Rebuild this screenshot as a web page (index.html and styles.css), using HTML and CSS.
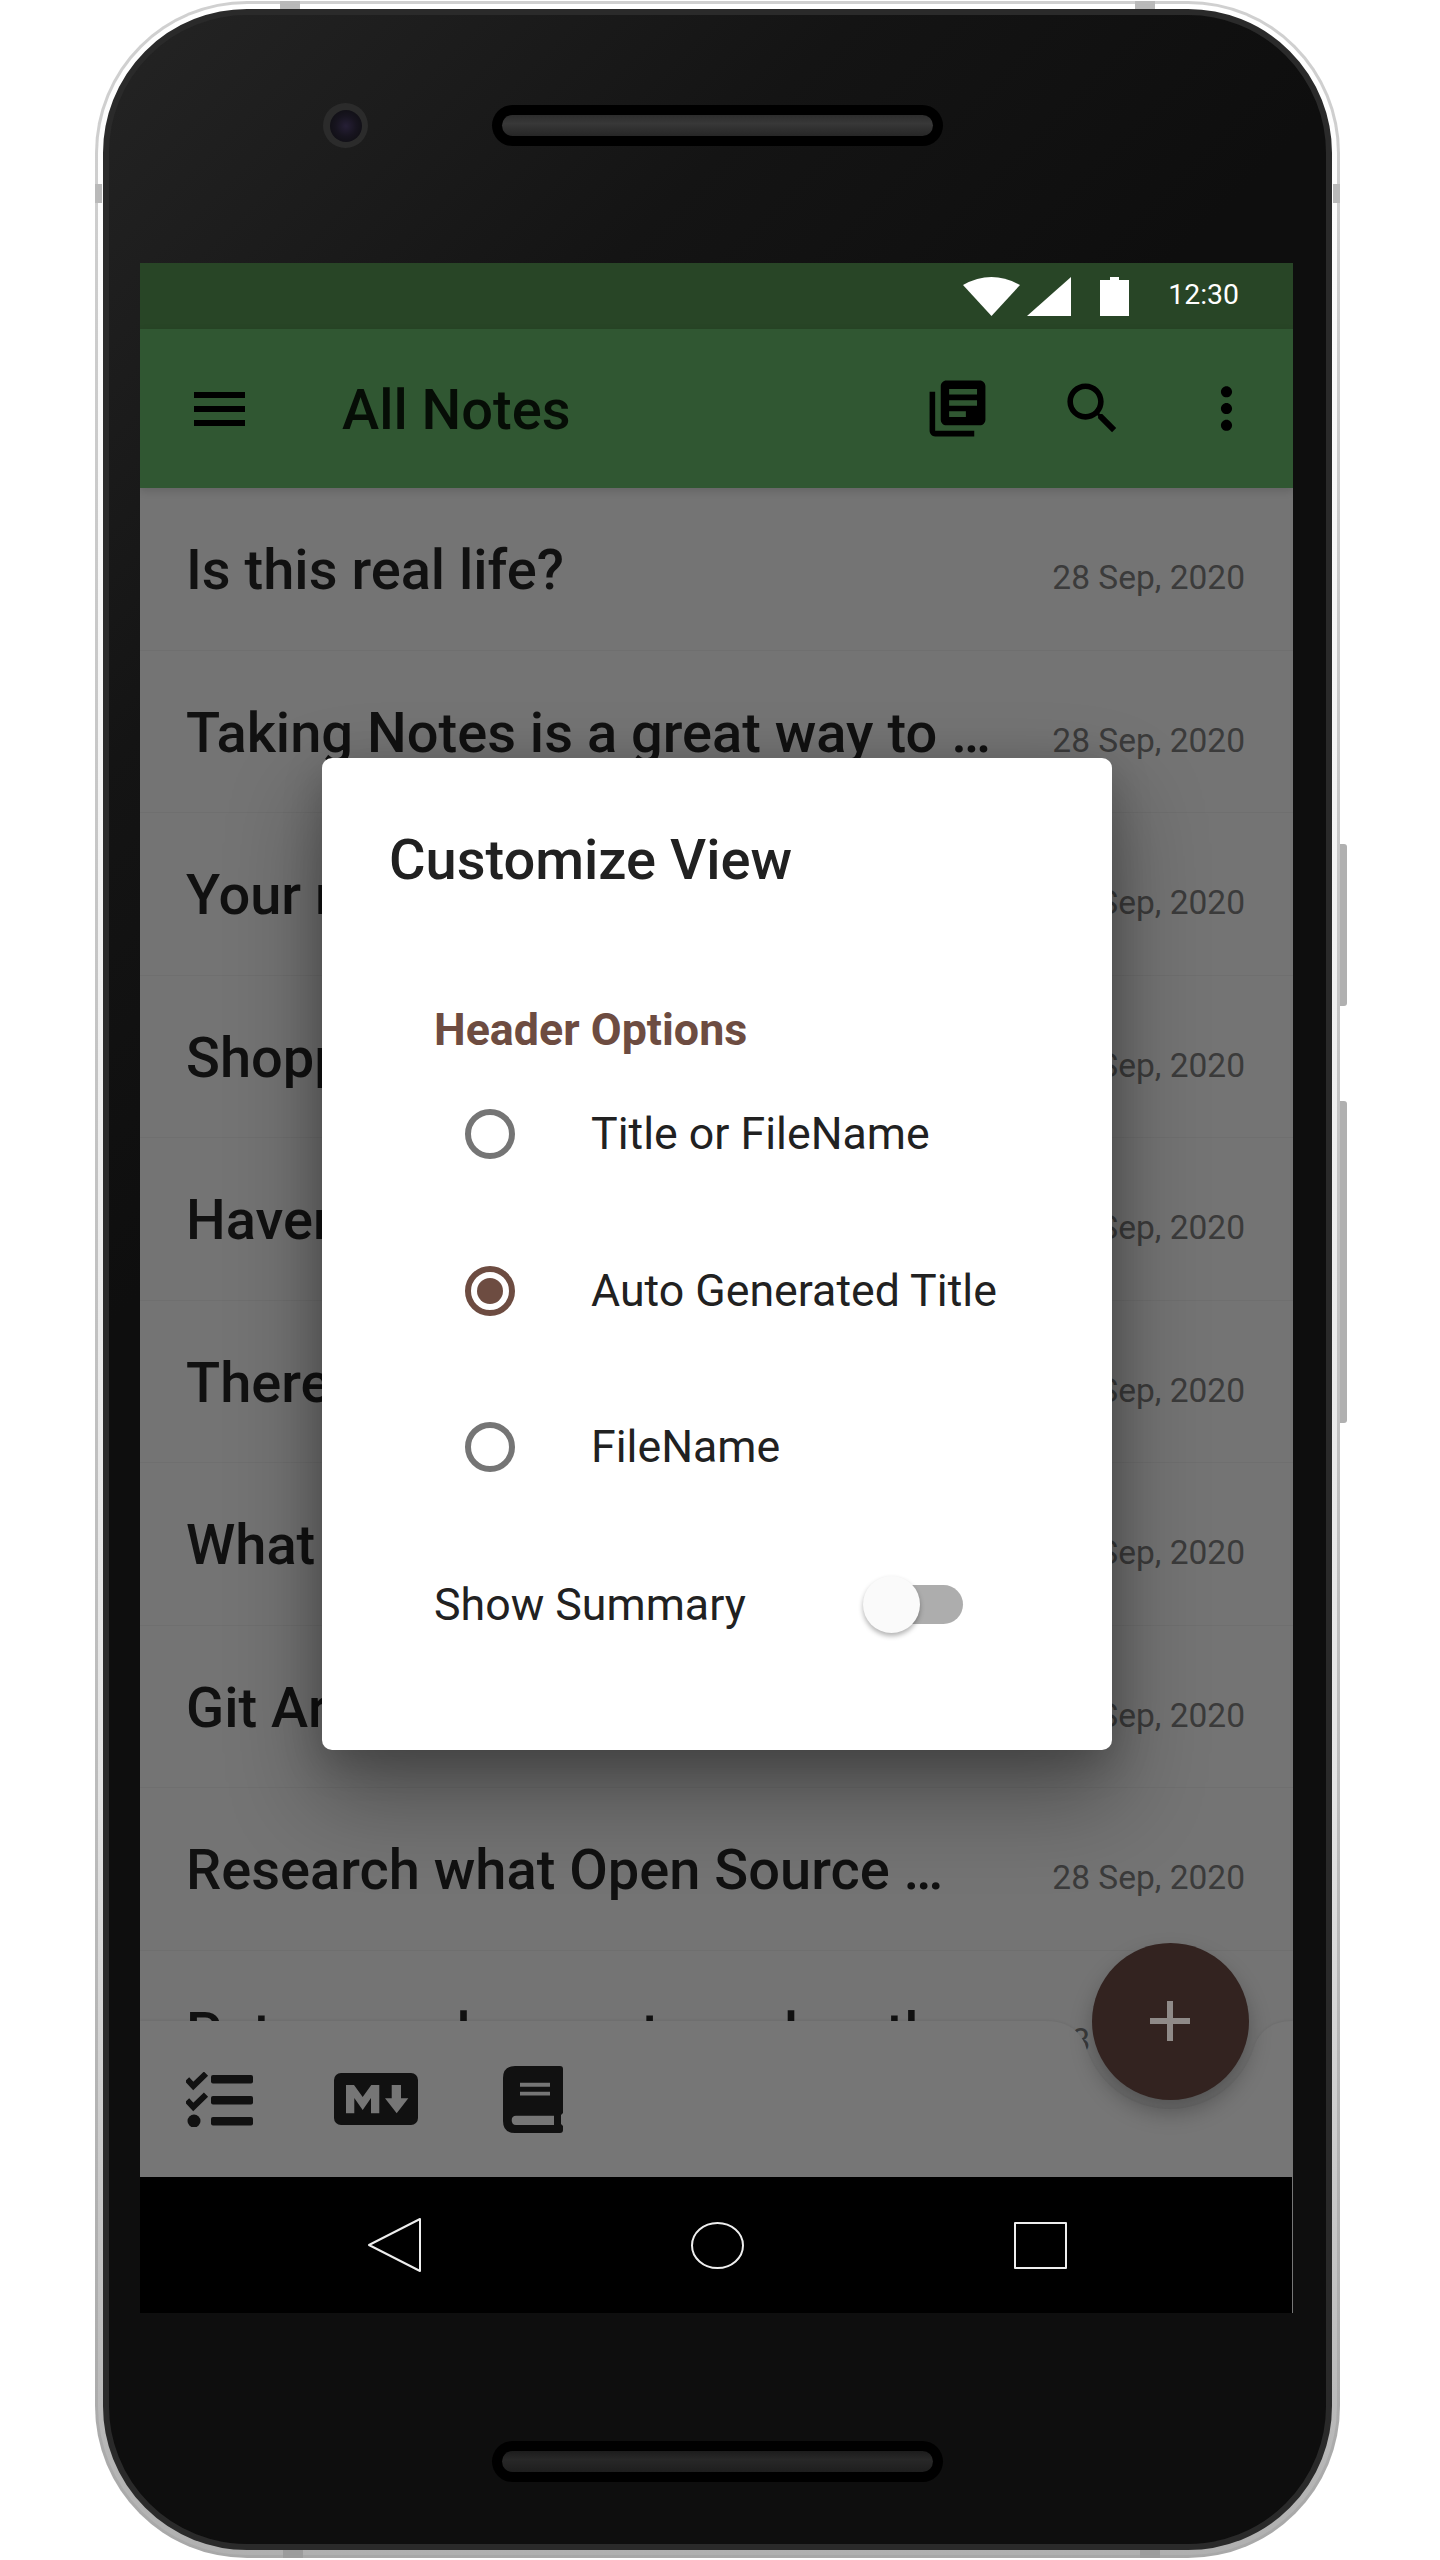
FILE: index.html
```html
<!DOCTYPE html>
<html lang="en"><head>

<meta charset="utf-8" />
<meta name="viewport" content="width=device-width, initial-scale=1" />
<title>All Notes</title>

<link rel="stylesheet" href="styles.css">

</head><body>

<div class="phone">
	<span class="notch notch_t1"></span>
	<span class="notch notch_t2"></span>
	<span class="notch notch_l"></span>
	<span class="notch notch_r"></span>
	<span class="notch notch_b1"></span>
	<span class="notch notch_b2"></span>
	<span class="side_btn side_btn_power"></span>
	<span class="side_btn side_btn_volume"></span>

	<div class="rim"><div class="body">

		<div class="bezel_top">
			<div class="camera"><span></span></div>
			<div class="speaker"><span></span></div>
		</div>

		<div class="screen">

			<div class="status_bar">
				<svg class="st_wifi" width="57" height="39" viewBox="0 0 57 39"><path d="M0 8Q28.5 -8 57 8L28.5 39Z" /></svg>
				<svg class="st_signal" width="44" height="39" viewBox="0 0 44 39"><path d="M44 0V39H0Z" /></svg>
				<svg class="st_battery" width="29" height="39" viewBox="0 0 29 39"><path d="M10 0H19V3H29V39H0V3H10Z" /></svg>
				<span class="st_time">12:30</span>
			</div>

			<div class="app_bar">
				<svg class="ic_menu" width="51" height="34" viewBox="0 0 51 34"><path d="M0 0H51V6H0ZM0 14H51V20H0ZM0 28H51V34H0Z" /></svg>
				<div class="app_title">All Notes</div>
				<div class="app_actions">
					<svg width="67" height="67" viewBox="0 0 24 24"><path d="M4 6H2v14c0 1.1.9 2 2 2h14v-2H4V6zm16-4H8c-1.1 0-2 .9-2 2v12c0 1.1.9 2 2 2h12c1.1 0 2-.9 2-2V4c0-1.1-.9-2-2-2zm-1 9H9V9h10v2zm-4 4H9v-2h6v2zm4-8H9V5h10v2z" /></svg>
					<svg width="67" height="67" viewBox="0 0 24 24"><path d="M15.5 14h-.79l-.28-.27C15.41 12.59 16 11.11 16 9.5 16 5.91 13.09 3 9.5 3S3 5.91 3 9.5 5.91 16 9.5 16c1.61 0 3.09-.59 4.23-1.57l.27.28v.79l5 4.99L20.49 19l-4.99-5zm-6 0C7.01 14 5 11.99 5 9.5S7.01 5 9.5 5 14 7.01 14 9.5 11.99 14 9.5 14z" /></svg>
					<svg width="67" height="67" viewBox="0 0 24 24"><path d="M12 8c1.1 0 2-.9 2-2s-.9-2-2-2-2 .9-2 2 .9 2 2 2zm0 2c-1.1 0-2 .9-2 2s.9 2 2 2 2-.9 2-2-.9-2-2-2zm0 6c-1.1 0-2 .9-2 2s.9 2 2 2 2-.9 2-2-.9-2-2-2z" /></svg>
				</div>
			</div>

			<div class="main">
				<div class="note_list">
					<div class="note_row"><span class="note_title">Is this real life?</span><span class="note_date">28 Sep, 2020</span></div>
					<div class="note_row"><span class="note_title">Taking Notes is a great way to …</span><span class="note_date">28 Sep, 2020</span></div>
					<div class="note_row"><span class="note_title">Your n</span><span class="note_date">28 Sep, 2020</span></div>
					<div class="note_row"><span class="note_title">Shopp</span><span class="note_date">28 Sep, 2020</span></div>
					<div class="note_row"><span class="note_title">Haven</span><span class="note_date">28 Sep, 2020</span></div>
					<div class="note_row"><span class="note_title">There</span><span class="note_date">28 Sep, 2020</span></div>
					<div class="note_row"><span class="note_title">What</span><span class="note_date">28 Sep, 2020</span></div>
					<div class="note_row"><span class="note_title">Git Ar</span><span class="note_date">28 Sep, 2020</span></div>
					<div class="note_row"><span class="note_title">Research what Open Source …</span><span class="note_date">28 Sep, 2020</span></div>
					<div class="note_row"><span class="note_title">Put some dreams to end so the …</span><span class="note_date">28 Sep, 2020</span></div>
				</div>

				<div class="bottom_bar">
					<svg class="bar_shape" width="1153" height="156" viewBox="0 0 1153 156"><path d="M0 0H905C930 0 942 12 946.6 28A88 88 0 0 0 1113.4 28C1118 12 1130 0 1153 0V156H0Z" /></svg>
					<svg class="bar_icon" width="67" height="55" viewBox="0 0 67 55">
						<path class="ic_stroke" d="M1 7.3L7.3 14L20 1.7M1 28.3L7.3 35L20 22.7" />
						<circle cx="8" cy="49" r="6.5" />
						<rect x="25" y="3" width="42" height="8.5" rx="2" />
						<rect x="25" y="24" width="42" height="8.5" rx="2" />
						<rect x="25" y="45" width="42" height="8.5" rx="2" />
					</svg>
					<svg class="bar_icon" width="84" height="52" viewBox="0 0 84 52">
						<rect width="84" height="52" rx="7" />
						<path class="ic_cut" d="M12 12H20L28.7 24L37.3 12H45.3V40.3H37V25L28.7 37L20.3 25V40.3H12Z" />
						<path class="ic_cut" d="M57.7 12H67V25.3H74.3L62.7 40.3L51 25.3H57.7Z" />
					</svg>
					<svg class="bar_icon bar_icon_book" width="60" height="67" viewBox="0 0 60 67">
						<path d="M12 0H57Q60 0 60 3V47L58 49V58L60 60V64Q60 67 57 67H12Q0 67 0 55V12Q0 0 12 0Z" />
						<path class="ic_cut" d="M13 49.7H51V59H13Q8.7 59 8.7 54.3Q8.7 49.7 13 49.7ZM17 16.7H47V20.7H17ZM17 25.7H47V29.5H17Z" />
					</svg>
				</div>

				<div class="fab"><svg width="40" height="40" viewBox="0 0 40 40"><path d="M17 0H23V17H40V23H23V40H17V23H0V17H17Z" /></svg></div>
			</div>

			<div class="nav_bar">
				<svg class="nav_icon" width="55" height="56" viewBox="0 0 55 56"><path d="M2 28L53 2V54Z" /></svg>
				<svg class="nav_icon" width="53" height="47" viewBox="0 0 53 47"><ellipse cx="26.5" cy="23.5" rx="25.5" ry="22.5" /></svg>
				<svg class="nav_icon" width="53" height="47" viewBox="0 0 53 47"><rect x="1" y="1" width="51" height="45" /></svg>
			</div>

			<div class="dialog">
				<div class="dialog_title">Customize View</div>
				<div class="dialog_section">Header Options</div>
				<div class="option"><span class="radio"></span><span class="option_text">Title or FileName</span></div>
				<div class="option"><span class="radio radio_on"></span><span class="option_text">Auto Generated Title</span></div>
				<div class="option"><span class="radio"></span><span class="option_text">FileName</span></div>
				<div class="summary_row">
					<span class="summary_text">Show Summary</span>
					<span class="switch"><span class="switch_track"></span><span class="switch_thumb"></span></span>
				</div>
			</div>

		</div>

		<div class="bezel_bottom">
			<div class="speaker speaker_low"><span></span></div>
		</div>

	</div></div>
</div>

</body></html>
```

FILE: styles.css
```css
:root {
	--list-bg     : #747474;
	--bar-bg      : #767676;
	--icon-dark   : #111111;
	--note-text   : #111111;
	--brown       : #6d4c41;
	--dialog-text : #212121;
}
* {
	box-sizing : border-box;
}
body {
	margin      : 0;
	background  : #ffffff;
	font-family : Roboto, sans-serif;
}

/* device frame */
.phone {
	position      : relative;
	width         : 1245px;
	margin        : 1px 0 0 95px;
	padding       : 3px;
	border-radius : 152px;
	background    : linear-gradient(to bottom, #d0d0d0, #bcbcbc 70%, #a8a8a8);
}
.rim {
	padding       : 5px;
	border-radius : 149px;
	background    : linear-gradient(to bottom, #ffffff, #e4e4e4 70%, #b0b0b0);
}
.body {
	border        : 6px solid #2a2a2a;
	border-radius : 144px;
	background    : linear-gradient(135deg, #242424, #141414 20%, #0e0e0e 35%);
}
.notch {
	position   : absolute;
	background : #b9b9b9;
}
.notch_t1 , .notch_t2 , .notch_b1 , .notch_b2 {
	width  : 20px;
	height : 8px;
}
.notch_t1 { top : 0; left : 185px; }
.notch_t2 { top : 0; left : 1040px; }
.notch_b1 { bottom : 0; left : 188px; background : #9c9c9c; }
.notch_b2 { bottom : 0; left : 1045px; background : #9c9c9c; }
.notch_l , .notch_r {
	top    : 183px;
	width  : 7px;
	height : 19px;
}
.notch_l { left : 0; }
.notch_r { right : 0; }
.side_btn {
	position      : absolute;
	left          : 100%;
	width         : 7px;
	background    : #b0b0b0;
	border-radius : 0 3px 3px 0;
}
.side_btn_power  { top : 843px;  height : 162px; }
.side_btn_volume { top : 1100px; height : 322px; }

.bezel_top {
	display      : flex;
	align-items  : center;
	height       : 248px;
	padding      : 88px 0 115px 214px;
	gap          : 124px;
}
.bezel_bottom {
	display         : flex;
	justify-content : center;
	height          : 231px;
	padding-top     : 128px;
}
.camera {
	display         : flex;
	align-items     : center;
	justify-content : center;
	width           : 45px;
	height          : 45px;
	border-radius   : 50%;
	background      : #2b2b2b;
}
.camera span {
	width         : 32px;
	height        : 32px;
	border-radius : 50%;
	background    : radial-gradient(circle, #261f36 0, #17141f 45%, #0c0c0e 100%);
}
.speaker {
	display       : flex;
	align-items   : center;
	width         : 451px;
	height        : 41px;
	padding       : 0 10px;
	border-radius : 21px;
	background    : #000000;
}
.speaker span {
	flex-grow     : 1;
	height        : 21px;
	border-radius : 11px;
	background    : linear-gradient(to bottom, #2c2c2c, #383838 40%, #262626);
}
.speaker_low span {
	background : linear-gradient(to bottom, #1c1c1c, #282828 40%, #1e1e1e);
}

/* screen */
.screen {
	position       : relative;
	display        : flex;
	flex-direction : column;
	width          : 1153px;
	height         : 2050px;
	margin-left    : 31px;
	overflow       : hidden;
}
.status_bar {
	display         : flex;
	align-items     : center;
	justify-content : flex-end;
	flex-shrink     : 0;
	height          : 66px;
	padding-right   : 54px;
	background      : #284526;
	fill            : #ffffff;
}
.st_signal  { margin-left : 7px; }
.st_battery { margin-left : 29px; }
.st_time {
	margin-left : 39px;
	color       : #ffffff;
	font-size   : 28.4px;
	position    : relative;
	top         : -2px;
}
.app_bar {
	position    : relative;
	z-index     : 2;
	display     : flex;
	align-items : center;
	flex-shrink : 0;
	height      : 159px;
	padding     : 0 33px 0 54px;
	background  : #305732;
	box-shadow  : 0 3px 8px rgba(0, 0, 0, 0.14);
	fill        : #000000;
}
.app_title {
	flex-grow   : 1;
	margin-left : 97px;
	padding-top : 3px;
	color       : #060d06;
	font-size   : 56px;
	font-weight : 500;
}
.app_actions {
	display : flex;
	gap     : 67.5px;
}
.app_actions svg {
	display : block;
}
.main {
	position   : relative;
	flex-grow  : 1;
	overflow   : hidden;
	background : var(--list-bg);
}
.note_row {
	display         : flex;
	align-items     : baseline;
	justify-content : space-between;
	height          : 162.5px;
	padding         : 49px 48px 0 46px;
	border-bottom   : 1px solid rgba(0, 0, 0, 0.035);
}
.note_title {
	color       : var(--note-text);
	font-size   : 56px;
	font-weight : 500;
	white-space : nowrap;
}
.note_date {
	color     : #3b3b3b;
	font-size : 33.5px;
}
.bottom_bar {
	position    : absolute;
	left        : 0;
	right       : 0;
	bottom      : 0;
	display     : flex;
	align-items : center;
	gap         : 81px;
	height      : 156px;
	padding     : 0 0 0 46px;
	fill        : var(--icon-dark);
}
.bar_shape {
	position : absolute;
	left     : 0;
	top      : 0;
	fill     : var(--bar-bg);
	filter   : drop-shadow(0 -1px 1px rgba(0, 0, 0, 0.06));
}
.bar_icon {
	position : relative;
	display  : block;
}
.bar_icon_book {
	margin-left : 4px;
}
.ic_stroke {
	fill   : none;
	stroke : var(--icon-dark);
	stroke-width : 6;
}
.ic_cut {
	fill : var(--bar-bg);
}
.fab {
	position        : absolute;
	right           : 44.5px;
	bottom          : 77.5px;
	display         : flex;
	align-items     : center;
	justify-content : center;
	width           : 157px;
	height          : 157px;
	border-radius   : 50%;
	background      : #332320;
	box-shadow      : 0 12px 22px rgba(0, 0, 0, 0.28);
	fill            : #8f8a88;
}
.nav_bar {
	display       : grid;
	grid-template-columns : repeat(3, 1fr);
	justify-items : center;
	align-items   : center;
	flex-shrink   : 0;
	height        : 136px;
	padding       : 0 90px 0 93px;
	background    : #000000;
	border-right  : 1px solid #777777;
}
.nav_icon {
	fill            : none;
	stroke          : #eeeeee;
	stroke-width    : 2;
	stroke-linejoin : round;
}

/* dialog */
.dialog {
	position      : absolute;
	left          : 182px;
	top           : 495px;
	width         : 790px;
	height        : 992px;
	padding-top   : 70px;
	border-radius : 10px;
	background    : #ffffff;
	color         : var(--dialog-text);
	box-shadow    : 0 44px 90px 6px rgba(0, 0, 0, 0.32), 0 12px 40px rgba(0, 0, 0, 0.2);
}
.dialog_title {
	padding-left : 67px;
	font-size    : 56px;
	font-weight  : 500;
	line-height  : 64px;
}
.dialog_section {
	margin-top   : 108px;
	padding-left : 112px;
	color        : var(--brown);
	font-size    : 44.8px;
	font-weight  : 700;
	line-height  : 60px;
}
.option {
	display     : flex;
	align-items : center;
	height      : 156.5px;
	margin-left : 143px;
	font-size   : 44.7px;
}
.dialog_section + .option {
	margin-top : -4px;
}
.radio {
	display       : flex;
	align-items   : center;
	justify-content : center;
	width         : 50px;
	height        : 50px;
	margin-right  : 76px;
	border        : 6px solid #757575;
	border-radius : 50%;
}
.radio_on {
	border-color : var(--brown);
}
.radio_on::before {
	content       : '';
	width         : 26px;
	height        : 26px;
	border-radius : 50%;
	background    : var(--brown);
}
.summary_row {
	display      : flex;
	align-items  : center;
	height       : 156.5px;
	margin-top   : 1px;
	padding-left : 112px;
	font-size    : 44.7px;
}
.switch {
	position    : relative;
	width       : 100px;
	height      : 57px;
	margin-left : 117px;
}
.switch_track {
	position      : absolute;
	right         : 0;
	top           : 9px;
	width         : 84px;
	height        : 39px;
	border-radius : 20px;
	background    : #adadad;
}
.switch_thumb {
	position      : absolute;
	left          : 0;
	top           : 0;
	width         : 57px;
	height        : 57px;
	border-radius : 50%;
	background    : #fafafa;
	box-shadow    : 0 3px 5px rgba(0, 0, 0, 0.3);
}
```
